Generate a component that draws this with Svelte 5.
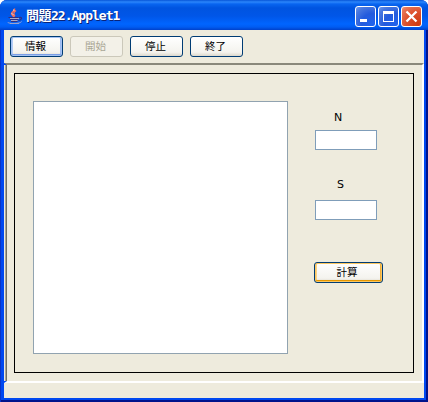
<script>
  const actions = [
    { label: '情報', state: 'focused' },
    { label: '開始', state: 'disabled' },
    { label: '停止', state: '' },
    { label: '終了', state: '' }
  ];
  let n = $state('');
  let s = $state('');
</script>

<div class="window">
  <header>
    <svg class="java" width="17" height="17" viewBox="0 0 17 17" fill="none">
      <path d="M7.500 0.500C8.500 3 4 4 4.500 6L7 9M9 2.500C6 5 6.500 6 7.500 7.500L6.500 9" stroke="#f4715c" stroke-width="1.500" />
      <path d="M6.500 1.500L7 3M4.500 5L6.500 7" stroke="#ffd0c4" />
      <path d="M1.500 9.500H11.500M3 11.500H11M4 13.500H10.500M12 9.500C16 8.500 15 12 11.500 12.500" stroke="#302f83" stroke-width="1.200" />
      <path d="M3 10.500H12M4 12.500H10.500" stroke="#a9abc9" />
      <path d="M1 14C0 16 14 16 14.500 13.500M3 15.500H12" stroke="#9da1cb" />
    </svg>
    <h1><span>問題</span>22.Applet1</h1>
    <div class="controls">
      <button class="control" aria-label="Minimize">
        <svg width="19" height="19" viewBox="0 0 19 19"><path d="M4 12h7v3H4z" fill="#fff" /></svg>
      </button>
      <button class="control" aria-label="Maximize">
        <svg width="19" height="19" viewBox="0 0 19 19"><path d="M4 4h11v11H4zM5 7v7h9V7z" fill="#fff" fill-rule="evenodd" /></svg>
      </button>
      <button class="control close" aria-label="Close">
        <svg width="19" height="19" viewBox="0 0 19 19"><path d="M4.500 4.500L14.500 14.500M14.500 4.500L4.500 14.500" stroke="#fff" stroke-width="2.300" /></svg>
      </button>
    </div>
  </header>
  <nav>
    {#each actions as action}
      <button class="push {action.state}" disabled={action.state === 'disabled'}>{action.label}</button>
    {/each}
  </nav>
  <main>
    <section>
      <div class="output"></div>
      <form onsubmit={(e) => e.preventDefault()}>
        <label for="n">N</label>
        <input id="n" bind:value={n} />
        <label class="second" for="s">S</label>
        <input id="s" bind:value={s} />
        <button class="push calc">計算</button>
      </form>
    </section>
  </main>
  <footer></footer>
</div>

<style>
  :global(body) { background: #fff; overflow: hidden; }
  * { box-sizing: border-box; }
  .window {
    width: 428px;
    height: 402px;
    padding: 0 4px 4px;
    display: flex;
    flex-direction: column;
    overflow: hidden;
    border-radius: 7px 7px 0 0;
    background: #0048f0;
    box-shadow: inset 1px 0 #0833c8, inset -2px -2px #00138c;
    font: 11px "Liberation Sans", "Noto Sans CJK JP", sans-serif;
  }
  header {
    height: 30px;
    flex: none;
    margin: 0 -4px;
    padding: 0 6px 0 7px;
    display: flex;
    align-items: flex-start;
    background: linear-gradient(#0755d8 0, #2b86fb 2px, #0865f0 4px, #0054e0 8px, #0056e8 16px, #0065ff 24px, #005cf2 27px, #0041ca 30px);
  }
  .java { margin-top: 8px; flex: none; }
  h1 {
    margin: 6px 0 0 2px;
    width: 110px;
    font: bold 13px/20px "DejaVu Sans Mono", "Noto Sans CJK JP", monospace;
    letter-spacing: -1px;
    white-space: nowrap;
    color: #fff;
    text-shadow: 1px 1px #0a2378;
  }
  h1 span { letter-spacing: -0.5px; }
  .controls { margin: 6px 0 0 auto; display: flex; gap: 2px; }
  .control {
    width: 21px;
    height: 21px;
    padding: 0;
    border: 1px solid #fff;
    border-radius: 3px;
    background: radial-gradient(circle at 85% 90%, #2163ec, #235bdd 45%, #4a79df 80%, #6f9aef);
  }
  .control svg { display: block; }
  .close { background: radial-gradient(circle at 85% 90%, #ce3c13, #dc4f2b 50%, #e77556 85%, #ee9b85); }
  nav {
    height: 33px;
    flex: none;
    padding: 6px 6px 0;
    display: flex;
    gap: 7px;
    background: #eeebdd;
  }
  .push {
    width: 53px;
    height: 21px;
    padding: 0 2px 1px 0;
    border: 1px solid #003c74;
    border-radius: 3px;
    background: linear-gradient(#fff, #f4f3ee 80%, #dcd8cc);
    font: 10.5px/18px "Noto Sans CJK JP", sans-serif;
    color: #000;
  }
  .focused { box-shadow: inset 0 0 0 1px #a5c3f3, inset 0 -2px #7b9ee5, inset 2px 0 #b5cdf5, inset -2px 0 #9bbaf0; }
  .disabled { border-color: #cbc8ba; background: #f3f1e8; color: #aaa796; }
  main {
    flex: 1;
    padding: 8px 8px 7px 7px;
    border: solid;
    border-width: 2px 2px 2px 3px;
    border-color: #8a887b #fff #fff transparent;
    background: linear-gradient(90deg, #eeebdd 1px, #aaa799 1px, #aaa799 2px, #716f64 2px, #716f64 3px, #eeebdd 3px) border-box;
  }
  section {
    width: 400px;
    height: 300px;
    border: 1px solid #000;
    padding: 27px 0 0 18px;
    display: flex;
  }
  .output { width: 255px; height: 253px; border: 1px solid #91a3b0; background: #fff; }
  form { margin-left: 26px; display: flex; flex-direction: column; align-items: flex-start; }
  label { height: 16px; margin: 9px 0 4px 20px; line-height: 16px; font-family: "DejaVu Sans", sans-serif; font-size: 11px; }
  .second { margin: 27px 0 7px 23px; }
  input { width: 62px; height: 20px; margin-left: 1px; padding: 1px 3px; border: 1px solid #7f9db9; border-radius: 0; background: #fff; outline: 0; }
  .calc { width: 69px; margin-top: 42px; padding-right: 3px; box-shadow: inset 0 0 0 1px #fbc761, inset 0 -2px #e59700, inset 2px 0 #fad387, inset -2px 0 #efae39; }
  footer { height: 15px; flex: none; background: #eeebdd; }
</style>
